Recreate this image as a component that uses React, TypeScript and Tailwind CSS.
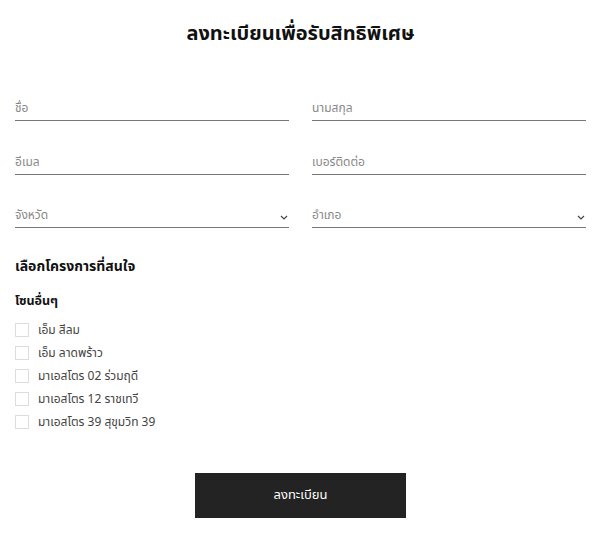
import React from "react";

const font = { fontFamily: '"Noto Sans Thai", "Noto Sans", "DejaVu Sans", sans-serif' };

function Field({ label, select }: { label: string; select?: boolean }) {
  return (
    <div className="flex h-[24px] items-end justify-between border-b border-[#777]">
      <span className="pb-[6px] text-[12px] leading-none text-[#888]">{label}</span>
      {select && (
        <svg width="8" height="5" viewBox="0 0 8 5" className="mb-[7px] mr-[1px]">
          <path d="M1 1l3 3 3-3" fill="none" stroke="#444" strokeWidth="1.2" />
        </svg>
      )}
    </div>
  );
}

const projects = [
  "เอ็ม สีลม",
  "เอ็ม ลาดพร้าว",
  "มาเอสโตร 02 ร่วมฤดี",
  "มาเอสโตร 12 ราชเทวี",
  "มาเอสโตร 39 สุขุมวิท 39",
];

export default function App() {
  return (
    <div className="h-[535px] w-[600px] bg-white pl-[15px] pr-[14px]" style={font}>
      <h1 className="pt-[21px] text-center text-[20px] font-bold leading-[26px] text-[#111]">
        ลงทะเบียนเพื่อรับสิทธิพิเศษ
      </h1>
      <div className="mt-[50px] grid grid-cols-2 gap-x-[23px] gap-y-[29.5px]">
        <Field label="ชื่อ" />
        <Field label="นามสกุล" />
        <Field label="อีเมล" />
        <Field label="เบอร์ติดต่อ" />
        <Field label="จังหวัด" select />
        <Field label="อำเภอ" select />
      </div>
      <h2 className="mt-[29px] text-[14px] font-bold leading-[20px] text-[#111]">เลือกโครงการที่สนใจ</h2>
      <h3 className="mt-[15px] text-[12.5px] font-bold leading-[20px] text-[#111]">โซนอื่นๆ</h3>
      <div className="mt-[11px] flex flex-col gap-[9px]">
        {projects.map((p) => (
          <label key={p} className="flex items-center gap-[9px]">
            <span className="h-[14px] w-[14px] border border-[#ddd] bg-white" />
            <span className="text-[12px] leading-[14px] text-[#444]">{p}</span>
          </label>
        ))}
      </div>
      <div className="mt-[44px] flex justify-center">
        <button className="h-[45px] w-[211px] bg-[#232323] text-[13px] text-white" style={font}>
          ลงทะเบียน
        </button>
      </div>
    </div>
  );
}
